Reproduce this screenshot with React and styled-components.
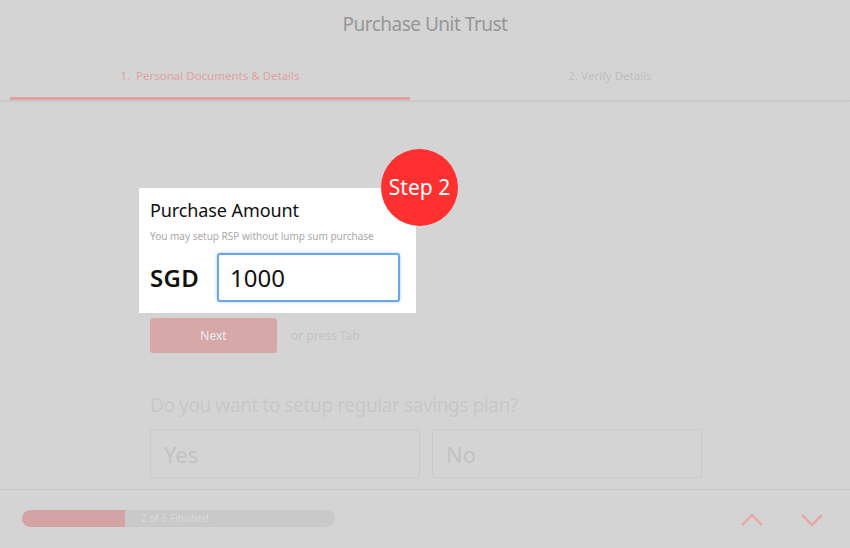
import React from "react"
import styled, { createGlobalStyle } from "styled-components"

const GlobalStyle = createGlobalStyle`
  html, body {
    margin: 0;
    padding: 0;
    background: #d4d4d4;
    font-family: "Noto Sans", "Open Sans", sans-serif;
  }
  * { box-sizing: border-box; }
`

const App = () => {
  return (
    <>
      <GlobalStyle />
      <Page>
        <Header>
          <Title>Purchase Unit Trust</Title>
          <Tabs>
            <Tab active>1.&nbsp; Personal Documents &amp; Details</Tab>
            <Tab>2. Verify Details</Tab>
          </Tabs>
        </Header>
        <Main>
          <Card>
            <Badge>Step 2</Badge>
            <CardTitle>Purchase Amount</CardTitle>
            <Hint>You may setup RSP without lump sum purchase</Hint>
            <AmountRow>
              <Currency>SGD</Currency>
              <AmountInput defaultValue="1000" />
            </AmountRow>
          </Card>
          <ActionRow>
            <NextButton>Next</NextButton>
            <PressHint>or press Tab</PressHint>
          </ActionRow>
          <Question>Do you want to setup regular savings plan?</Question>
          <Choices>
            <Choice>Yes</Choice>
            <Choice>No</Choice>
          </Choices>
        </Main>
        <Footer>
          <Progress>
            <ProgressFill />
            <ProgressLabel>2 of 6 Finished</ProgressLabel>
          </Progress>
          <Arrows>
            <ArrowButton>
              <svg width="24" height="16" viewBox="0 0 24 16">
                <polyline points="2,13 12,3 22,13" fill="none" stroke="#e8a8a8" strokeWidth="2.6" />
              </svg>
            </ArrowButton>
            <ArrowButton>
              <svg width="24" height="16" viewBox="0 0 24 16">
                <polyline points="2,3 12,13 22,3" fill="none" stroke="#e8a8a8" strokeWidth="2.6" />
              </svg>
            </ArrowButton>
          </Arrows>
        </Footer>
      </Page>
    </>
  )
}

export default App

const Page = styled.div`
  width: 850px;
  height: 548px;
  display: flex;
  flex-direction: column;
  overflow: hidden;
`
const Header = styled.div`
  display: flex;
  flex-direction: column;
`
const Title = styled.div`
  height: 50px;
  display: flex;
  align-items: center;
  justify-content: center;
  padding-bottom: 2px;
  font-size: 19px;
  color: #979797;
  letter-spacing: -0.5px;
`
const Tabs = styled.div`
  height: 51px;
  display: flex;
  padding: 0 10px;
  border-bottom: 1px solid #c9c9c9;
  box-shadow: 0 1px 2px rgba(0, 0, 0, 0.06);
`
const Tab = styled.div`
  width: 400px;
  display: flex;
  align-items: center;
  justify-content: center;
  padding-top: 4px;
  font-size: 11.5px;
  color: ${(p) => (p.active ? "#dfa3a3" : "#bfbfbf")};
  border-bottom: 3px solid ${(p) => (p.active ? "#e3a0a0" : "transparent")};
`
const Main = styled.div`
  flex: 1;
  display: flex;
  flex-direction: column;
  align-items: flex-start;
  padding: 87px 0 0 139px;
`
const Card = styled.div`
  position: relative;
  z-index: 2;
  width: 277px;
  height: 125px;
  background: #ffffff;
  padding: 9px 15px 0 11px;
`
const Badge = styled.div`
  position: absolute;
  top: -39px;
  right: -42px;
  width: 77px;
  height: 77px;
  border-radius: 50%;
  background: #ff3030;
  color: #ffffff;
  display: flex;
  align-items: center;
  justify-content: center;
  font-size: 21px;
  padding-bottom: 1px;
`
const CardTitle = styled.div`
  font-size: 18px;
  color: #111;
  line-height: 26px;
  letter-spacing: -0.1px;
`
const Hint = styled.div`
  margin-top: 6px;
  font-size: 10px;
  line-height: 14px;
  color: #a9a9a9;
`
const AmountRow = styled.div`
  margin-top: 10px;
  display: flex;
  align-items: center;
  gap: 14px;
`
const Currency = styled.div`
  font-size: 24px;
  font-weight: 600;
  color: #111;
  width: 53px;
  letter-spacing: 0.3px;
`
const AmountInput = styled.input`
  width: 183px;
  height: 49px;
  border: 2px solid #6aa7e8;
  border-radius: 3px;
  box-shadow: 0 0 3px rgba(80, 150, 230, 0.5);
  padding: 0 11px;
  font-family: "Noto Sans", sans-serif;
  font-size: 24px;
  color: #111;
  outline: none;
`
const ActionRow = styled.div`
  margin: 5px 0 0 11px;
  display: flex;
  align-items: center;
  gap: 14px;
`
const NextButton = styled.div`
  width: 127px;
  height: 35px;
  border-radius: 3px;
  background: #d6a8a8;
  color: #ececec;
  font-size: 12px;
  display: flex;
  align-items: center;
  justify-content: center;
`
const PressHint = styled.div`
  font-size: 12px;
  color: #c4c4c4;
`
const Question = styled.div`
  margin: 39px 0 0 11px;
  font-size: 19px;
  color: #c8c8c8;
  letter-spacing: -0.4px;
`
const Choices = styled.div`
  margin: 11px 0 0 11px;
  display: flex;
  gap: 12px;
`
const Choice = styled.div`
  width: 270px;
  height: 49px;
  border: 1px solid #cbcbcb;
  border-radius: 2px;
  display: flex;
  align-items: center;
  padding-left: 13px;
  font-size: 22px;
  color: #c3c3c3;
`
const Footer = styled.div`
  height: 59px;
  flex-shrink: 0;
  border-top: 1px solid #c9c9c9;
  display: flex;
  align-items: center;
  justify-content: space-between;
  padding: 0 26px 2px 22px;
`
const Progress = styled.div`
  position: relative;
  width: 313px;
  height: 17px;
  border-radius: 9px;
  background: #c9c9c9;
  overflow: hidden;
  display: flex;
  align-items: center;
`
const ProgressFill = styled.div`
  width: 103px;
  height: 100%;
  background: #d4a3a3;
`
const ProgressLabel = styled.div`
  margin-left: 16px;
  font-size: 10px;
  color: #dadada;
`
const Arrows = styled.div`
  display: flex;
  gap: 36px;
  padding-top: 4px;
`
const ArrowButton = styled.div`
  display: flex;
`
